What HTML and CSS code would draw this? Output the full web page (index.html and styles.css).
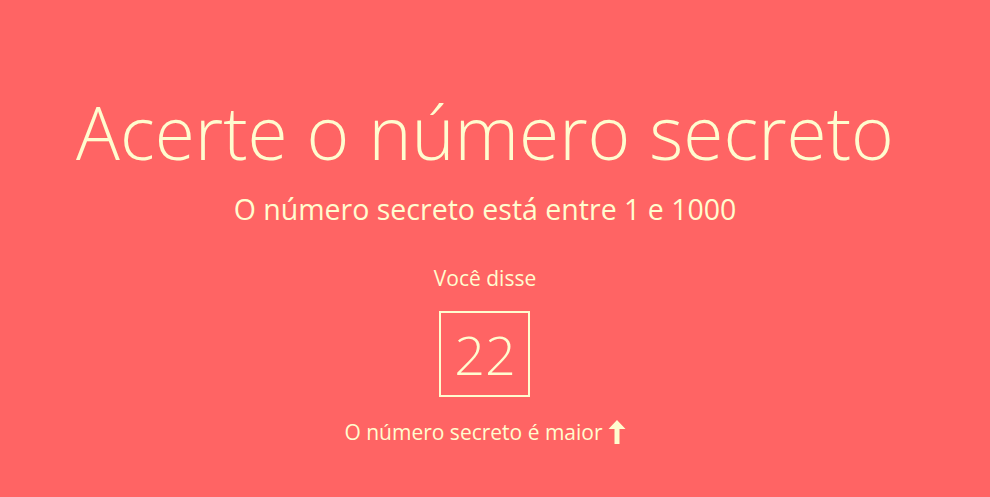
FILE: index.html
```html
<!DOCTYPE html>
<html lang="pt-BR">
<head>
<meta charset="utf-8">
<title>Jogo do número secreto</title>
<link rel="stylesheet" href="styles.css">
</head>
<body>
<main class="game">
  <h1 class="title">Acerte o número secreto</h1>
  <h3 class="range">O número secreto está entre 1 e 1000</h3>
  <div class="guess">
    <p class="said">Você disse</p>
    <div class="box">22</div>
    <p class="hint">O número secreto é maior<svg class="arrow" width="18" height="24" viewBox="0 0 18 24"><path d="M9 0 L17.5 9 L11.5 9 L11.5 24 L6.5 24 L6.5 9 L0.5 9 Z" fill="#fffccf"/></svg></p>
  </div>
</main>
</body>
</html>
```

FILE: styles.css
```css
html, body {
  margin: 0;
  height: 100%;
}
body {
  background: #ff6464;
  color: #fffccf;
  font-family: "Open Sans", "Noto Sans", sans-serif;
}
.game {
  display: flex;
  flex-direction: column;
  align-items: center;
  padding-top: 82px;
  padding-right: 20px;
}
.title {
  margin: 0;
  font-size: 73px;
  font-weight: 300;
  line-height: 100px;
}
.range {
  margin: 0;
  margin-top: 9px;
  font-size: 28.5px;
  font-weight: 400;
  line-height: 36px;
}
.guess {
  display: flex;
  flex-direction: column;
  align-items: center;
  margin-top: 36px;
}
.said {
  margin: 0;
  font-size: 21px;
  line-height: 30px;
}
.box {
  margin-top: 18px;
  width: 87px;
  height: 82px;
  border: 2px solid #fffccf;
  display: flex;
  align-items: center;
  justify-content: center;
  font-size: 54px;
  font-weight: 300;
}
.hint {
  margin: 0;
  margin-top: 20px;
  font-size: 21px;
  line-height: 30px;
  display: flex;
  align-items: center;
  gap: 5px;
}
.arrow {
  display: block;
}
```
